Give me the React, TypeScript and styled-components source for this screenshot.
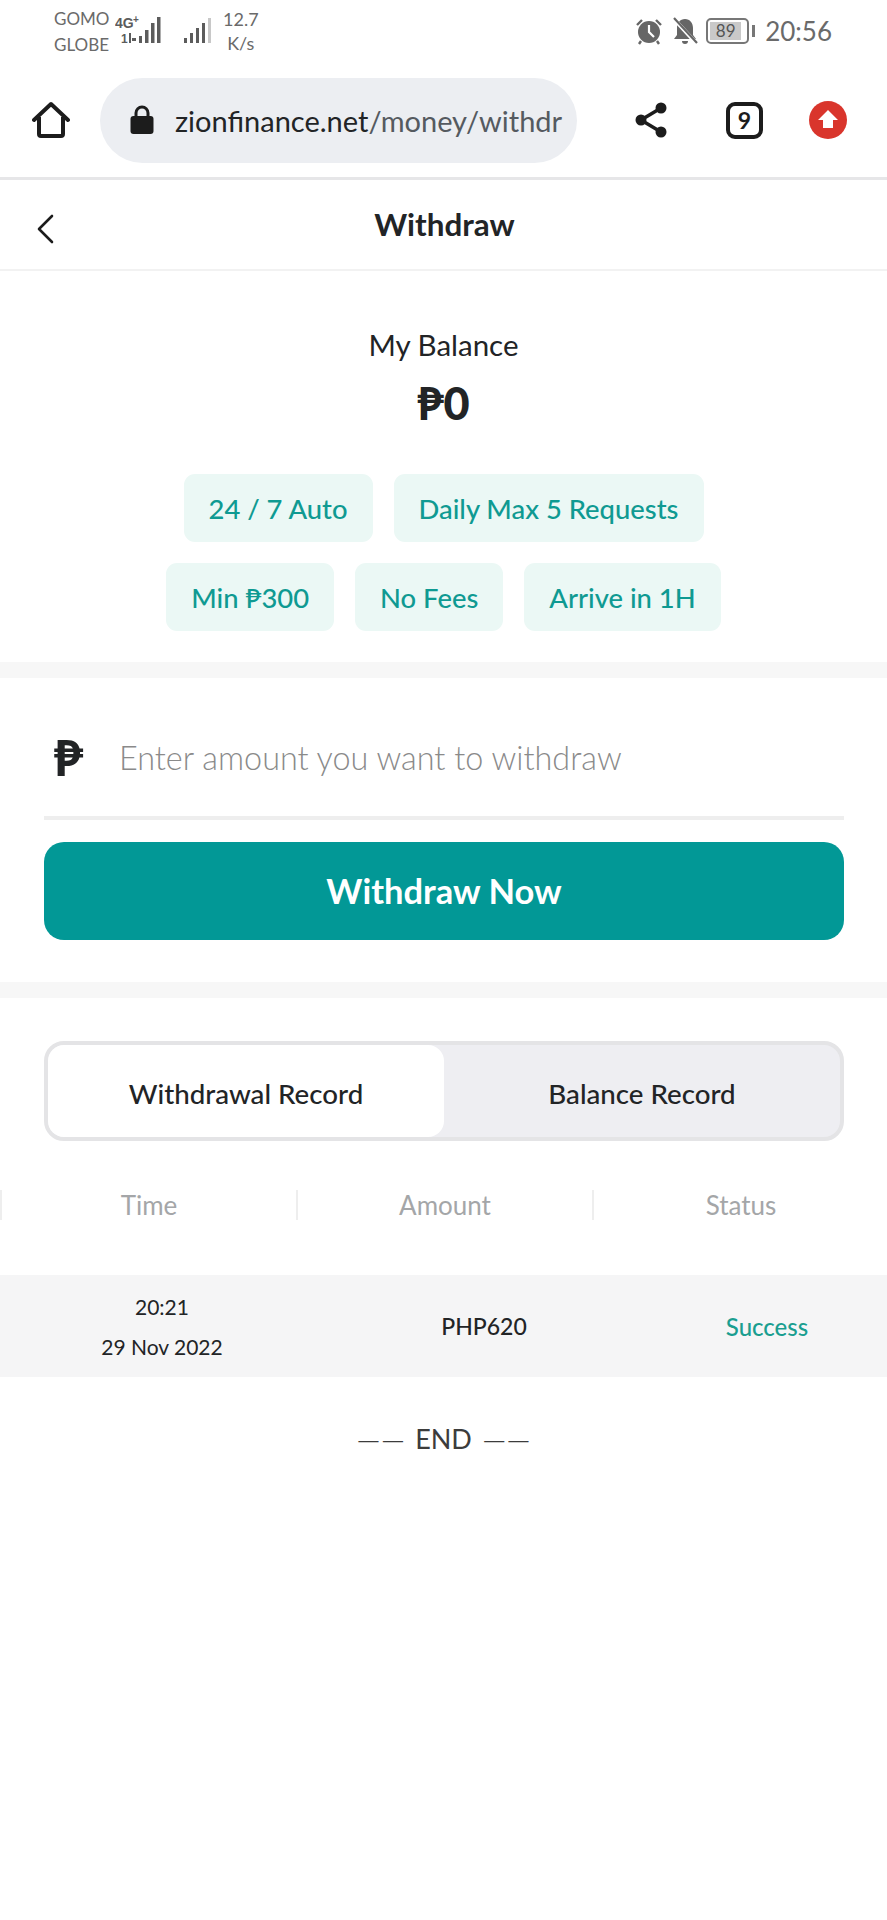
import styled, { createGlobalStyle } from "styled-components";

const GlobalStyle = createGlobalStyle`
  html, body {
    margin: 0;
    padding: 0;
    background: #ffffff;
  }
  * {
    box-sizing: border-box;
  }
`;

const Window = styled.div`
  width: 887px;
  height: 1920px;
  background-color: #ffffff;
  font-family: "Lato", "Noto Sans", "DejaVu Sans", sans-serif;
  color: #222426;
  overflow: hidden;
`;

const StatusBar = styled.div`
  height: 60px;
  padding: 6px 55px 0 54px;
  display: flex;
  justify-content: space-between;
  color: #6a6a6a;
`;
const StatusLeft = styled.div`
  display: flex;
  align-items: flex-start;
`;
const Carriers = styled.div`
  font-size: 17px;
  line-height: 26px;
  width: 61px;
`;
const NetworkSvg = styled.svg`
  margin-top: 3px;
`;
const SignalSvg = styled.svg`
  margin: 11px 0 0 19px;
`;
const Speed = styled.div`
  font-size: 18px;
  line-height: 24px;
  text-align: center;
  margin-left: 11px;
  margin-top: 1px;
`;
const StatusRight = styled.div`
  display: flex;
  align-items: center;
  height: 50px;
`;
const BellSvg = styled.svg`
  margin-left: 9px;
`;
const Battery = styled.div`
  width: 43px;
  height: 26px;
  border: 2px solid #777;
  border-radius: 5px;
  padding: 2px;
  margin-left: 8px;
  font-size: 17px;
  line-height: 18px;
  display: flex;
  position: relative;
  &::after {
    content: "";
    position: absolute;
    right: -8px;
    top: 5px;
    width: 3px;
    height: 12px;
    background: #777;
  }
`;
const BatteryFill = styled.span`
  background: #c9c9c9;
  width: 31px;
  text-align: center;
  color: #555;
`;
const Clock = styled.div`
  font-size: 26px;
  margin-left: 16px;
`;

const BrowserBar = styled.div`
  height: 120px;
  padding: 18px 0 15px 32px;
  display: flex;
  align-items: center;
  border-bottom: 3px solid #e6e6e8;
`;
const UrlPill = styled.div`
  width: 477px;
  height: 85px;
  margin-left: 30px;
  padding: 0 10px 0 30px;
  border-radius: 43px;
  background-color: #eceef2;
  display: flex;
  align-items: center;
  gap: 21px;
`;
const LockSvg = styled.svg`
  flex: none;
`;
const UrlText = styled.div`
  font-size: 29px;
  white-space: nowrap;
  flex: 1;
  color: #222426;
`;
const UrlPath = styled.span`
  color: #555a60;
`;
const BarActions = styled.div`
  margin-left: 58px;
  display: flex;
  align-items: center;
`;
const TabCount = styled.div`
  width: 37px;
  height: 37px;
  margin: 0 46px 0 59px;
  border: 4px solid #1c1c1c;
  border-radius: 9px;
  font-size: 23px;
  font-weight: 700;
  display: flex;
  align-items: center;
  justify-content: center;
  color: #1c1c1c;
`;

const TopBar = styled.div`
  height: 91px;
  padding-left: 36px;
  display: grid;
  grid-template-columns: 1fr auto 1fr;
  align-items: center;
  border-bottom: 2px solid #f2f2f2;
`;
const BackSvg = styled.svg`
  margin-top: 9px;
`;
const Title = styled.div`
  margin: -2px 0 0 -34px;
  font-size: 31.4px;
  font-weight: 700;
  line-height: 40px;
`;

const BalanceSection = styled.div`
  height: 407px;
  padding-top: 56px;
  display: flex;
  flex-direction: column;
  align-items: center;
  border-bottom: 16px solid #f7f7f7;
`;
const BalanceLabel = styled.div`
  font-size: 29.5px;
  line-height: 36px;
`;
const BalanceValue = styled.div`
  margin-top: 18px;
  font-size: 45px;
  font-weight: 900;
  line-height: 44px;
`;
const ChipRow = styled.div`
  display: flex;
  gap: 21px;
  margin-top: 21px;
`;
const FirstChipRow = styled(ChipRow)`
  margin-top: 49px;
`;
const Chip = styled.div`
  height: 68px;
  padding: 0 25px;
  border-radius: 11px;
  background-color: #ebf8f5;
  color: #0f9a92;
  font-size: 27.4px;
  font-weight: 500;
  display: flex;
  align-items: center;
`;

const WithdrawSection = styled.div`
  height: 320px;
  padding: 48px 43px 0 44px;
  border-bottom: 16px solid #f7f7f7;
`;
const InputRow = styled.div`
  height: 94px;
  padding: 0 0 28px 10px;
  display: flex;
  align-items: center;
  border-bottom: 4px solid #eeeeee;
`;
const PesoSign = styled.div`
  width: 65px;
  font-size: 50px;
  font-weight: 900;
  line-height: 50px;
`;
const AmountInput = styled.input`
  flex: 1;
  border: 0;
  outline: 0;
  padding: 0;
  background: transparent;
  font-family: inherit;
  font-size: 32.4px;
  font-weight: 300;
  &::placeholder {
    color: #8a8a8a;
    opacity: 1;
  }
`;
const WithdrawButton = styled.button`
  display: block;
  width: 100%;
  height: 98px;
  margin-top: 22px;
  padding: 0 0 2px;
  border: 0;
  border-radius: 20px;
  background-color: #029896;
  color: #ffffff;
  font-family: inherit;
  font-size: 34.5px;
  font-weight: 700;
`;

const RecordSection = styled.div`
  padding-top: 43px;
`;
const Tabs = styled.div`
  width: 800px;
  height: 100px;
  margin-left: 44px;
  border: 4px solid #e4e4e6;
  border-radius: 20px;
  background-color: #eeeef2;
  display: flex;
`;
const TabItem = styled.div<{ $active?: boolean }>`
  width: 396px;
  padding-top: 5px;
  border-radius: 16px;
  background-color: ${(p) => (p.$active ? "#ffffff" : "transparent")};
  font-size: 27.7px;
  font-weight: 500;
  display: flex;
  align-items: center;
  justify-content: center;
`;

const TableHead = styled.div`
  display: grid;
  grid-template-columns: repeat(3, 296px);
  margin-top: 49px;
`;
const HeadCell = styled.div`
  height: 30px;
  border-left: 2px solid #eeeeee;
  color: #a4a6a8;
  font-size: 26px;
  line-height: 30px;
  text-align: center;
`;
const DataRow = styled.div`
  height: 102px;
  margin-top: 55px;
  background-color: #f5f5f6;
  display: grid;
  grid-template-columns: 324px 320px 1fr;
  align-items: center;
  text-align: center;
`;
const TimeCell = styled.div`
  padding-top: 2px;
  font-size: 21px;
  line-height: 40px;
`;
const AmountCell = styled.div`
  font-size: 23px;
  font-weight: 500;
`;
const StatusCell = styled.div`
  padding-left: 3px;
  font-size: 24px;
  font-weight: 500;
  color: #1a9e90;
`;
const EndMark = styled.div`
  margin-top: 44px;
  font-size: 27px;
  line-height: 36px;
  display: flex;
  justify-content: center;
  align-items: center;
  gap: 10px;
  color: #3c3c3c;
`;
const EndDash = styled.span`
  font-size: 31px;
  font-weight: 300;
`;

function NetworkIcon() {
  return (
    <NetworkSvg width="50" height="44" viewBox="0 0 50 44">
      <text x="0" y="19" fontSize="14" fontWeight="900" fill="#5c5c5c" fontFamily="Liberation Sans, sans-serif">
        4G
      </text>
      <text x="18" y="14" fontSize="10" fontWeight="700" fill="#5c5c5c" fontFamily="Liberation Sans, sans-serif">
        +
      </text>
      <text x="6" y="34" fontSize="12" fontWeight="900" fill="#5c5c5c" fontFamily="Liberation Sans, sans-serif">
        1
      </text>
      <path d="M14 24h2v10h-2zM17 29h4v3h-4z" fill="#5c5c5c" />
      <rect x="24" y="27" width="3" height="7" fill="#5c5c5c" />
      <rect x="30" y="21" width="3.5" height="13" fill="#5c5c5c" />
      <rect x="36" y="14" width="3.5" height="20" fill="#5c5c5c" />
      <rect x="42" y="8" width="3.5" height="26" fill="#5c5c5c" />
    </NetworkSvg>
  );
}

function SignalIcon() {
  return (
    <SignalSvg width="28" height="28" viewBox="0 0 28 28">
      <rect x="0" y="21" width="3" height="5" fill="#5c5c5c" />
      <rect x="6" y="16" width="3" height="10" fill="#5c5c5c" />
      <rect x="12" y="11" width="3" height="15" fill="#5c5c5c" />
      <rect x="18" y="6" width="3" height="20" fill="#5c5c5c" />
      <rect x="24" y="1" width="3" height="25" fill="#c8c8c8" />
    </SignalSvg>
  );
}

function AlarmIcon() {
  return (
    <svg width="28" height="28" viewBox="0 0 28 28">
      <circle cx="14" cy="15" r="11" fill="#666" />
      <path d="M14 8v7l5 5" stroke="#fff" strokeWidth="2.2" fill="none" />
      <path d="M2 8l5-5M26 8l-5-5M6 24l-2 3M22 24l2 3" stroke="#666" strokeWidth="2.4" />
    </svg>
  );
}

function BellOffIcon() {
  return (
    <BellSvg width="26" height="28" viewBox="0 0 26 28">
      <path d="M13 2c-5 0-8 4-8 9v7l-3 4h22l-3-4v-7c0-5-3-9-8-9z" fill="#666" />
      <path d="M10 24h6a3 3 0 0 1-6 0z" fill="#666" />
      <path d="M2 2l22 24" stroke="#fff" strokeWidth="4" />
      <path d="M2 1l23 25" stroke="#666" strokeWidth="2.2" />
    </BellSvg>
  );
}

function HomeIcon() {
  return (
    <svg width="38" height="38" viewBox="0 0 38 38">
      <path d="M2 19 19 3l17 16" fill="none" stroke="#1c1c1c" strokeWidth="4" strokeLinejoin="round" strokeLinecap="round" />
      <path d="M7 16v17a2 2 0 0 0 2 2h20a2 2 0 0 0 2-2V16" fill="none" stroke="#1c1c1c" strokeWidth="4" />
    </svg>
  );
}

function LockIcon() {
  return (
    <LockSvg width="24" height="30" viewBox="0 0 24 30">
      <path d="M6 13V8a6 6 0 0 1 12 0v5" fill="none" stroke="#1c1c1c" strokeWidth="3" />
      <rect x="0.5" y="11" width="23" height="18" rx="3" fill="#1c1c1c" />
    </LockSvg>
  );
}

function ShareIcon() {
  return (
    <svg width="32" height="36" viewBox="0 0 32 36">
      <path d="M26 6 6 18l20 12" fill="none" stroke="#1c1c1c" strokeWidth="3.5" />
      <circle cx="26" cy="6" r="5.5" fill="#1c1c1c" />
      <circle cx="6" cy="18" r="5.5" fill="#1c1c1c" />
      <circle cx="26" cy="30" r="5.5" fill="#1c1c1c" />
    </svg>
  );
}

function UpdateIcon() {
  return (
    <svg width="38" height="38" viewBox="0 0 38 38">
      <circle cx="19" cy="19" r="19" fill="#d9352c" />
      <path d="M19 9 29 19h-5v8H14v-8H9z" fill="#ffffff" />
    </svg>
  );
}

function BackIcon() {
  return (
    <BackSvg width="18" height="30" viewBox="0 0 18 30">
      <path d="M16 2 3 15l13 13" fill="none" stroke="#1c1c1c" strokeWidth="2.6" strokeLinecap="round" strokeLinejoin="round" />
    </BackSvg>
  );
}

function App() {
  return (
    <Window>
      <GlobalStyle />
      <StatusBar>
        <StatusLeft>
          <Carriers>
            GOMO
            <br />
            GLOBE
          </Carriers>
          <NetworkIcon />
          <SignalIcon />
          <Speed>
            12.7
            <br />
            K/s
          </Speed>
        </StatusLeft>
        <StatusRight>
          <AlarmIcon />
          <BellOffIcon />
          <Battery>
            <BatteryFill>89</BatteryFill>
          </Battery>
          <Clock>20:56</Clock>
        </StatusRight>
      </StatusBar>

      <BrowserBar>
        <HomeIcon />
        <UrlPill>
          <LockIcon />
          <UrlText>
            zionfinance.net<UrlPath>/money/withdr</UrlPath>
          </UrlText>
        </UrlPill>
        <BarActions>
          <ShareIcon />
          <TabCount>9</TabCount>
          <UpdateIcon />
        </BarActions>
      </BrowserBar>

      <TopBar>
        <BackIcon />
        <Title>Withdraw</Title>
      </TopBar>

      <BalanceSection>
        <BalanceLabel>My Balance</BalanceLabel>
        <BalanceValue>₱0</BalanceValue>
        <FirstChipRow>
          <Chip>24 / 7 Auto</Chip>
          <Chip>Daily Max 5 Requests</Chip>
        </FirstChipRow>
        <ChipRow>
          <Chip>Min ₱300</Chip>
          <Chip>No Fees</Chip>
          <Chip>Arrive in 1H</Chip>
        </ChipRow>
      </BalanceSection>

      <WithdrawSection>
        <InputRow>
          <PesoSign>₱</PesoSign>
          <AmountInput placeholder="Enter amount you want to withdraw" />
        </InputRow>
        <WithdrawButton>Withdraw Now</WithdrawButton>
      </WithdrawSection>

      <RecordSection>
        <Tabs>
          <TabItem $active>Withdrawal Record</TabItem>
          <TabItem>Balance Record</TabItem>
        </Tabs>
        <TableHead>
          <HeadCell>Time</HeadCell>
          <HeadCell>Amount</HeadCell>
          <HeadCell>Status</HeadCell>
        </TableHead>
        <DataRow>
          <TimeCell>
            20:21
            <br />
            29 Nov 2022
          </TimeCell>
          <AmountCell>PHP620</AmountCell>
          <StatusCell>Success</StatusCell>
        </DataRow>
        <EndMark>
          <EndDash>——</EndDash>
          END
          <EndDash>——</EndDash>
        </EndMark>
      </RecordSection>
    </Window>
  );
}

export default App;
